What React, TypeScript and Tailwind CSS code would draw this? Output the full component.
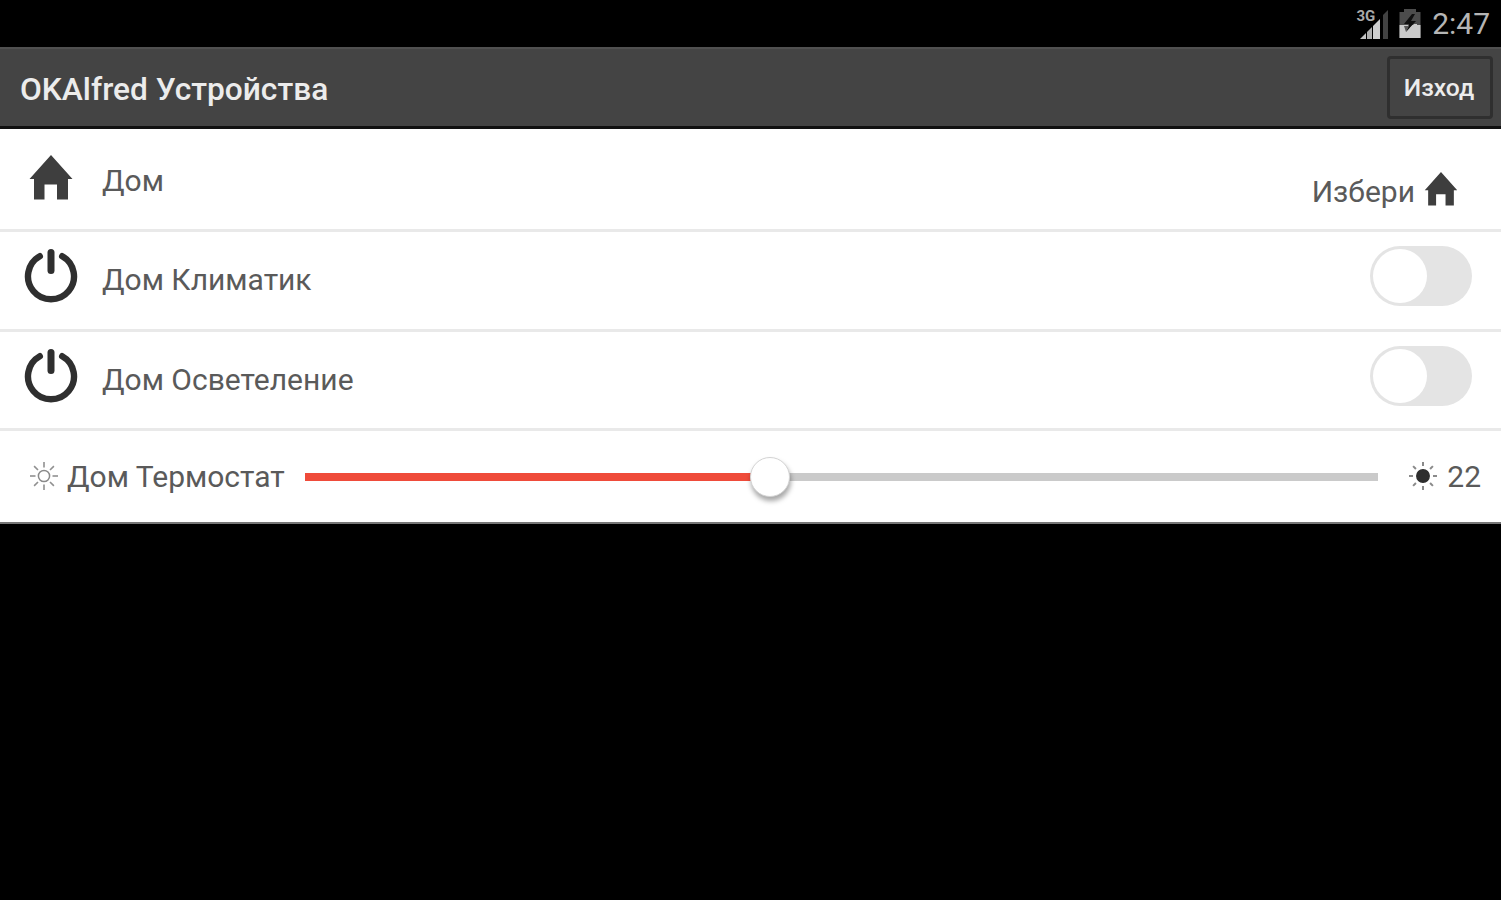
import { useState } from "react";

const MIN_TEMP = 10;
const MAX_TEMP = 38;

const HomeIcon = ({ className }: { className: string }) => (
  <svg viewBox="0 0 42 45" className={className} fill="#3e3e3e">
    <path d="M21 0 L42.5 24 H38 V44.5 H27 V29.5 H14.5 V44.5 H4 V24 H-0.5 Z" />
  </svg>
);

const PowerIcon = () => (
  <svg
    viewBox="0 0 54 54"
    className="h-[54px] w-[54px] shrink-0"
    fill="none"
    stroke="#2f2f2f"
    strokeLinecap="round"
  >
    <path d="M15.8 7.2 A23 23 0 1 0 38.2 7.2" strokeWidth="6.4" />
    <path d="M27 3.5 V21.5" strokeWidth="7" />
  </svg>
);

const RAYS = [0, 45, 90, 135, 180, 225, 270, 315];

const SunIcon = ({ filled }: { filled?: boolean }) => (
  <svg viewBox="-15 -15 30 30" className="h-[30px] w-[30px] shrink-0">
    <circle
      r={filled ? 6.2 : 5.6}
      fill={filled ? "#2e2e2e" : "none"}
      stroke={filled ? "#2e2e2e" : "#8a8a8a"}
      strokeWidth="1.5"
    />
    {RAYS.map((angle) => (
      <path
        key={angle}
        d={filled ? "M0 -10 V-14" : "M0 -8.5 V-14"}
        stroke={filled ? "#8a8a8a" : "#909090"}
        strokeWidth={filled ? 2 : 1.6}
        transform={`rotate(${angle})`}
      />
    ))}
  </svg>
);

const SignalIcon = () => (
  <svg viewBox="0 0 34 34" className="h-[34px] w-[34px] overflow-visible">
    <path d="M5 32 H11 V26 Z" fill="#c4c4c4" />
    <path d="M12 32 H17 V20 L12 25 Z" fill="#b0b0b0" />
    <path d="M18 32 H25 V12 L18 19 Z" fill="#cfcfcf" />
    <path d="M28 32 H33 V3 L28 8 Z" fill="#424242" />
    <text
      x="1.5"
      y="13.5"
      fontSize="15"
      fontWeight="700"
      fontFamily="Roboto, sans-serif"
      fill="#a8a8a8"
    >
      3G
    </text>
  </svg>
);

const BatteryIcon = () => (
  <svg viewBox="0 0 22 30" className="h-[30px] w-[22px]">
    <path d="M5 0 H17 V3 H21.5 V29 H0.5 V3 H5 Z" fill="#4c4c4c" />
    <path d="M0.5 16 H21.5 V29 H0.5 Z" fill="#cbcbcb" />
    <path d="M13 5 L5 15 H10 L7 23 L17 12 H12 L16 5 Z" fill="#101010" />
    <path d="M5 17 H10 L7 23 Z" fill="#5a5a5a" />
    <path d="M11 19 L15 15 H18 V19 Z" fill="#cbcbcb" />
  </svg>
);

const Toggle = ({ on, onToggle }: { on: boolean; onToggle: () => void }) => (
  <button
    role="switch"
    aria-checked={on}
    onClick={onToggle}
    className={`flex h-[60px] w-[102px] items-center rounded-full p-[3px] ${
      on ? "justify-end bg-[#ef4b3a]" : "bg-[#e4e4e4]"
    }`}
  >
    <span className="h-[54px] w-[54px] rounded-full bg-white" />
  </button>
);

const DeviceRow = ({ name }: { name: string }) => {
  const [on, setOn] = useState(false);

  return (
    <li className="flex h-[99.5px] items-start border-b-[3px] border-[#e9e9e9] pr-[29px] pl-6">
      <div className="pt-[17px]">
        <PowerIcon />
      </div>
      <span className="ml-[24px] pt-[30px] text-[30px] leading-9">{name}</span>
      <div className="ml-auto pt-[14px]">
        <Toggle on={on} onToggle={() => setOn(!on)} />
      </div>
    </li>
  );
};

export default function App() {
  const [temp] = useState(22);
  const percent = ((temp - MIN_TEMP) / (MAX_TEMP - MIN_TEMP)) * 100 + 0.5;

  return (
    <div className="flex h-[900px] w-full flex-col bg-black font-['Roboto','Noto_Sans',sans-serif] text-[#5a5a5a]">
      <div className="flex h-[47px] items-center justify-end pr-[11px]">
        <SignalIcon />
        <div className="ml-[10px]">
          <BatteryIcon />
        </div>
        <span className="ml-[11px] text-[30px] text-[#b5b5b5]">2:47</span>
      </div>

      <header className="flex h-[82px] items-center justify-between border-t-2 border-b-[3px] border-t-[#505050] border-b-[#111111] bg-[#444444] pr-2 pl-5 text-[#ececec]">
        <h1 className="pt-[4px] text-[31.7px] leading-10 font-medium">
          OKAlfred Устройства
        </h1>
        <button className="h-[63px] w-[106px] rounded-[4px] border-[3px] border-[#2f2f2f] pr-[2px] text-[24.7px] font-medium">
          Изход
        </button>
      </header>

      <ul className="h-[395px] border-b-2 border-[#777777] bg-white">
        <li className="flex h-[103px] items-start border-b-[3px] border-[#e9e9e9] pr-11 pl-[30px]">
          <HomeIcon className="mt-[26px] h-[45px] w-[42px] overflow-visible" />
          <span className="ml-[30px] pt-[34px] text-[30px] leading-9">Дом</span>
          <button className="mt-[43px] ml-auto flex items-start">
            <span className="mt-[2px] text-[30px] leading-9">Избери</span>
            <HomeIcon className="ml-[10px] h-[34px] w-[32px] overflow-visible" />
          </button>
        </li>
        <DeviceRow name="Дом Климатик" />
        <DeviceRow name="Дом Осветеление" />
        <li className="flex h-[90px] items-center pr-5 pl-[29px]">
          <SunIcon />
          <span className="ml-[8px] w-[238px] text-[30px]">Дом Термостат</span>
          <div className="relative mt-[2px] h-[8px] w-[1073px] bg-[#cacaca]">
            <div
              className="h-full bg-[#ef4b3a]"
              style={{ width: `${percent}%` }}
            />
            <div
              className="absolute top-1/2 h-10 w-10 -translate-x-1/2 -translate-y-1/2 rounded-full border border-[#d4d4d4] bg-white shadow-[1px_4px_5px_rgba(0,0,0,0.35)]"
              style={{ left: `${percent}%` }}
            />
          </div>
          <div className="ml-auto flex items-center gap-[9px]">
            <SunIcon filled />
            <span className="text-[30px]">{temp}</span>
          </div>
        </li>
      </ul>
    </div>
  );
}
